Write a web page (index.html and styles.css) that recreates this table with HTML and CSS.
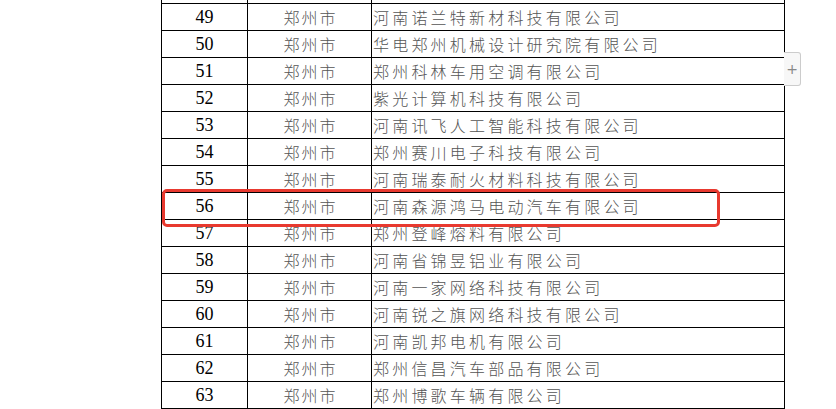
FILE: index.html
```html
<!DOCTYPE html>
<html lang="zh-CN">
<head>
<meta charset="utf-8">
<link rel="stylesheet" href="styles.css">
</head>
<body>
<div class="sheet">
  <table class="list">
    <colgroup><col class="c-no"><col class="c-city"><col class="c-name"></colgroup>
    <tbody>
      <tr class="edge"><td></td><td></td><td></td></tr>
      <tr><td class="no">49</td><td class="city">郑州市</td><td class="name">河南诺兰特新材科技有限公司</td></tr>
      <tr><td class="no">50</td><td class="city">郑州市</td><td class="name">华电郑州机械设计研究院有限公司</td></tr>
      <tr><td class="no">51</td><td class="city">郑州市</td><td class="name">郑州科林车用空调有限公司</td></tr>
      <tr><td class="no">52</td><td class="city">郑州市</td><td class="name">紫光计算机科技有限公司</td></tr>
      <tr><td class="no">53</td><td class="city">郑州市</td><td class="name">河南讯飞人工智能科技有限公司</td></tr>
      <tr><td class="no">54</td><td class="city">郑州市</td><td class="name">郑州赛川电子科技有限公司</td></tr>
      <tr><td class="no">55</td><td class="city">郑州市</td><td class="name">河南瑞泰耐火材料科技有限公司</td></tr>
      <tr><td class="no">56</td><td class="city">郑州市</td><td class="name">河南森源鸿马电动汽车有限公司</td></tr>
      <tr><td class="no">57</td><td class="city">郑州市</td><td class="name">郑州登峰熔料有限公司</td></tr>
      <tr><td class="no">58</td><td class="city">郑州市</td><td class="name">河南省锦昱铝业有限公司</td></tr>
      <tr><td class="no">59</td><td class="city">郑州市</td><td class="name">河南一家网络科技有限公司</td></tr>
      <tr><td class="no">60</td><td class="city">郑州市</td><td class="name">河南锐之旗网络科技有限公司</td></tr>
      <tr><td class="no">61</td><td class="city">郑州市</td><td class="name">河南凯邦电机有限公司</td></tr>
      <tr><td class="no">62</td><td class="city">郑州市</td><td class="name">郑州信昌汽车部品有限公司</td></tr>
      <tr><td class="no">63</td><td class="city">郑州市</td><td class="name">郑州博歌车辆有限公司</td></tr>
      <tr class="edge"><td></td><td></td><td></td></tr>
    </tbody>
  </table>
  <div class="highlight"></div>
  <div class="expand">+</div>
</div>
</body>
</html>
```
FILE: styles.css
```css
html, body {
  margin: 0;
  padding: 0;
  background: #fff;
  overflow: hidden;
}
body {
  width: 836px;
  height: 409px;
}
.sheet {
  position: relative;
  margin-left: 161px;
  margin-top: -24px;
  width: 640px;
}
.list {
  border-collapse: collapse;
  table-layout: fixed;
  width: 623px;
}
.c-no { width: 86px; }
.c-city { width: 124px; }
.c-name { width: 413px; }
.list td {
  border: 1px solid #000;
  height: 26px;
  line-height: 26px;
  padding: 0;
  white-space: nowrap;
  overflow: hidden;
  vertical-align: middle;
}
.no {
  font-family: "Liberation Serif", "Times New Roman", serif;
  font-size: 18px;
  color: #000;
  text-align: center;
}
.city {
  font-family: "Noto Sans CJK SC", sans-serif;
  font-size: 16px;
  font-weight: 300;
  color: #555;
  text-align: center;
  letter-spacing: 2px;
  padding-left: 2px !important;
}
.name {
  font-family: "Noto Sans CJK SC", sans-serif;
  font-size: 16px;
  font-weight: 300;
  color: #555;
  letter-spacing: 3.2px;
  padding-left: 1px !important;
}
.highlight {
  position: absolute;
  left: 1px;
  top: 213px;
  width: 552px;
  height: 32px;
  border: 3px solid #e8392f;
  border-radius: 5px;
}
.expand {
  position: absolute;
  left: 623px;
  top: 76px;
  width: 16px;
  height: 32px;
  background: #f7f7f7;
  border: 1px solid #ccc;
  border-left: none;
  border-radius: 0 3px 3px 0;
  color: #888;
  font-family: "DejaVu Sans", sans-serif;
  font-size: 14px;
  line-height: 32px;
  text-align: center;
}
```
